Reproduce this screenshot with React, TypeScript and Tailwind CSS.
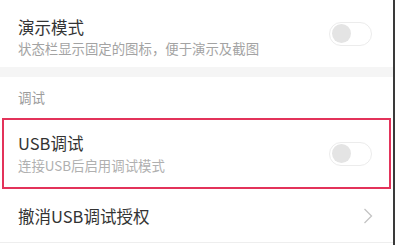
import React from "react";

function Toggle() {
  return (
    <div className="w-[43px] h-[24px] rounded-full border-[1.5px] border-[#ececec] bg-white flex items-center px-[1.5px]">
      <div className="w-[19px] h-[19px] rounded-full bg-[#e4e4e4]" />
    </div>
  );
}

export default function App() {
  const font = { fontFamily: '"Noto Sans CJK SC", "Noto Sans", sans-serif' };
  return (
    <div className="w-[395px] h-[245px] bg-white overflow-hidden border-r-2 border-[#3a3a3a] flex flex-col" style={font}>
      <div className="h-[67px] flex items-center pl-[18px] pr-[21px]">
        <div className="flex-1 flex flex-col pt-[6px]">
          <div className="text-[16.5px] leading-[22px] text-[#333]">演示模式</div>
          <div className="text-[13.4px] leading-[20px] text-[#a3a3a3]">状态栏显示固定的图标，便于演示及截图</div>
        </div>
        <Toggle />
      </div>
      <div className="h-[10px] bg-[#f5f5f5]" />
      <div className="h-[41px] flex items-center pl-[18px] text-[13.5px] text-[#9c9c9c]">调试</div>
      <div className="mx-[2px] h-[71px] border-2 border-[#e3335a] flex items-center pl-[14px] pr-[17px]">
        <div className="flex-1 flex flex-col">
          <div className="text-[16.5px] leading-[22px] text-[#333]">USB调试</div>
          <div className="text-[13.4px] leading-[22px] text-[#b0b0b0]">连接USB后启用调试模式</div>
        </div>
        <Toggle />
      </div>
      <div className="h-[54px] flex items-center pl-[18px] pr-[20px] border-b border-[#eeeeee]">
        <div className="flex-1 text-[16.5px] text-[#333] pt-[2px]">撤消USB调试授权</div>
        <svg width="10" height="16" viewBox="0 0 10 16" fill="none">
          <path d="M1.5 1 L8.5 8 L1.5 15" stroke="#c4c4c4" strokeWidth="1.3" />
        </svg>
      </div>
    </div>
  );
}
